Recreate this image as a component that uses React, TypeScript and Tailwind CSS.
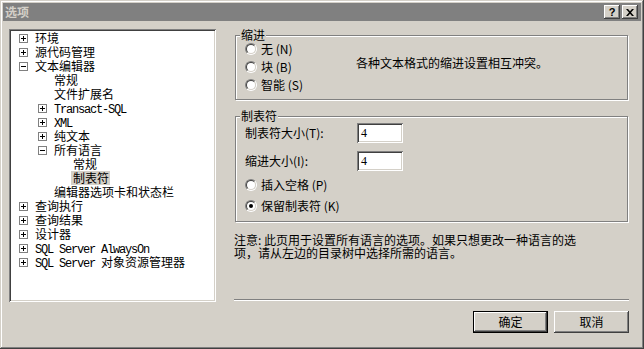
import React from "react";

type Node = { t: string; l: 0 | 1 | 2; e?: "+" | "-"; mono?: boolean; sel?: boolean; mixed?: [string, string] };

const tree: Node[] = [
  { t: "环境", l: 0, e: "+" },
  { t: "源代码管理", l: 0, e: "+" },
  { t: "文本编辑器", l: 0, e: "-" },
  { t: "常规", l: 1 },
  { t: "文件扩展名", l: 1 },
  { t: "Transact-SQL", l: 1, e: "+", mono: true },
  { t: "XML", l: 1, e: "+", mono: true },
  { t: "纯文本", l: 1, e: "+" },
  { t: "所有语言", l: 1, e: "-" },
  { t: "常规", l: 2 },
  { t: "制表符", l: 2, sel: true },
  { t: "编辑器选项卡和状态栏", l: 1 },
  { t: "查询执行", l: 0, e: "+" },
  { t: "查询结果", l: 0, e: "+" },
  { t: "设计器", l: 0, e: "+" },
  { t: "SQL Server AlwaysOn", l: 0, e: "+", mono: true },
  { t: "", l: 0, e: "+", mixed: ["SQL Server ", "对象资源管理器"] },
];

const indent = ["pl-[8px]", "pl-[27px]", "pl-[46px]"];

function Expander({ kind }: { kind: "+" | "-" }) {
  return (
    <svg width="9" height="9" viewBox="0 0 9 9" className="block shrink-0">
      <rect x="0.5" y="0.5" width="8" height="8" fill="#fff" stroke="#808080" />
      <path d="M2 4.5H7" stroke="#000" />
      {kind === "+" && <path d="M4.5 2V7" stroke="#000" />}
    </svg>
  );
}

function Mono({ children }: { children: React.ReactNode }) {
  return <span className="font-['Liberation_Mono',monospace] text-[12px] tracking-[-1.2px]">{children}</span>;
}

function Radio({ checked }: { checked?: boolean }) {
  return (
    <div className="w-[12px] h-[12px] rounded-full border border-t-[#808080] border-l-[#808080] border-b-white border-r-white shrink-0">
      <div className="w-full h-full rounded-full border border-t-[#404040] border-l-[#404040] border-b-[#d4d0c8] border-r-[#d4d0c8] bg-white flex items-center justify-center">
        {checked && <div className="w-[4px] h-[4px] rounded-full bg-black" />}
      </div>
    </div>
  );
}

function RadioRow({ label, checked }: { label: string; checked?: boolean }) {
  return (
    <div className="h-[18px] flex items-center gap-[4px]">
      <Radio checked={checked} />
      <span className="block h-[14px] leading-[14px] whitespace-nowrap">{label}</span>
    </div>
  );
}

function Field({ value }: { value: string }) {
  return (
    <div className="w-[46px] h-[20px] bg-white shadow-[inset_1px_1px_#808080,inset_-1px_-1px_#fff,inset_2px_2px_#404040,inset_-2px_-2px_#d4d0c8] flex items-center pl-[4px] font-['Liberation_Serif',serif] text-[12px] leading-[12px]">
      {value}
    </div>
  );
}

function Group({ label, className, children }: { label: string; className: string; children: React.ReactNode }) {
  return (
    <div className={"relative border border-[#808080] shadow-[inset_1px_1px_0_#fff,1px_1px_0_#fff] " + className}>
      <span className="absolute -top-[7px] left-[4px] px-[1px] bg-[#d4d0c8] block h-[12px] leading-[12px]">{label}</span>
      {children}
    </div>
  );
}

const raised = "shadow-[inset_-1px_-1px_#404040,inset_1px_1px_#fff,inset_-2px_-2px_#808080,inset_2px_2px_#d4d0c8]";

export default function App() {
  return (
    <div className="w-[644px] h-[349px] bg-[#d4d0c8] p-[3px] flex flex-col text-[12px] leading-[14px] text-black font-['Noto_Sans_CJK_SC',sans-serif] shadow-[inset_-1px_-1px_#404040,inset_1px_1px_#d4d0c8,inset_-2px_-2px_#808080,inset_2px_2px_#fff]">
      {/* title bar */}
      <div className="h-[18px] bg-[#808080] flex items-center justify-between pl-[2px] pr-[3px]">
        <span className="text-[#d4d0c8] font-bold text-[12px] leading-[12px] block h-[12px]">选项</span>
        <div className="flex gap-[2px]">
          <div className={"w-[16px] h-[14px] bg-[#d4d0c8] flex items-center justify-center " + raised}>
            <span className="font-['Liberation_Sans',sans-serif] font-bold text-[11px] leading-[11px] mt-[1px] block">?</span>
          </div>
          <div className={"w-[16px] h-[14px] bg-[#d4d0c8] flex items-center justify-center " + raised}>
            <svg width="8" height="7" viewBox="0 0 8 7" className="block">
              <path d="M0 0h2l2 2.3L6 0h2L5 3.5 8 7H6L4 4.7 2 7H0l3-3.5z" fill="#000" />
            </svg>
          </div>
        </div>
      </div>

      {/* body */}
      <div className="flex-1 flex pl-[6px] pt-[8px]">
        {/* tree */}
        <div className="w-[207px] h-[273px] bg-white p-[2px] shadow-[inset_1px_1px_#808080,inset_-1px_-1px_#fff,inset_2px_2px_#404040,inset_-2px_-2px_#d4d0c8]">
          {tree.map((n, i) => (
            <div key={i} className={"h-[14px] flex items-center whitespace-nowrap " + indent[n.l]}>
              <div className="w-[16px] shrink-0 flex items-center">{n.e && <Expander kind={n.e} />}</div>
              {n.sel ? (
                <span className="block h-[14px] leading-[14px] bg-[#d4d0c8] ml-[-2px] pl-[2px] pr-[1px]">{n.t}</span>
              ) : n.mixed ? (
                <span className="block h-[14px] leading-[14px]">
                  <Mono>{n.mixed[0]}</Mono>
                  {n.mixed[1]}
                </span>
              ) : n.mono ? (
                <span className="block h-[14px] leading-[14px]">
                  <Mono>{n.t}</Mono>
                </span>
              ) : (
                <span className="block h-[14px] leading-[14px]">{n.t}</span>
              )}
            </div>
          ))}
        </div>

        {/* right panel */}
        <div className="ml-[18px] w-[395px] flex flex-col pt-[6px] pb-[13px]">
          <Group label="缩进" className="ml-[1px] w-[393px] h-[65px] flex pl-[9px] pt-[4px]">
            <div className="w-[111px]">
              <RadioRow label="无 (N)" />
              <RadioRow label="块 (B)" />
              <RadioRow label="智能 (S)" />
            </div>
            <div className="mt-[17px] h-[12px] leading-[12px]">各种文本格式的缩进设置相互冲突。</div>
          </Group>

          <Group label="制表符" className="ml-[1px] mt-[16px] w-[393px] h-[106px] pl-[9px] pt-[6px]">
            <div className="h-[20px] flex items-center">
              <span className="w-[112px] block h-[12px] leading-[12px]">制表符大小(T):</span>
              <Field value="4" />
            </div>
            <div className="h-[20px] flex items-center mt-[8px]">
              <span className="w-[112px] block h-[12px] leading-[12px]">缩进大小(I):</span>
              <Field value="4" />
            </div>
            <div className="mt-[5px]">
              <RadioRow label="插入空格 (P)" />
            </div>
            <div className="mt-[3px]">
              <RadioRow label="保留制表符 (K)" checked />
            </div>
          </Group>

          <div className="mt-[11px] whitespace-nowrap">
            <div className="h-[13px] leading-[13px]">注意: 此页用于设置所有语言的选项。如果只想更改一种语言的选</div>
            <div className="h-[13px] leading-[13px]">项，请从左边的目录树中选择所需的语言。</div>
          </div>

          <div className="mt-auto h-[2px] border-t border-t-[#808080] border-b border-b-white" />

          <div className="mt-[10px] flex justify-end gap-[6px]">
            <div className="w-[75px] h-[22px] border border-black bg-[#d4d0c8] flex items-center justify-center">
              <div className={"w-full h-full flex items-center justify-center " + raised}>确定</div>
            </div>
            <div className={"w-[75px] h-[22px] bg-[#d4d0c8] flex items-center justify-center " + raised}>取消</div>
          </div>
        </div>
      </div>
    </div>
  );
}
